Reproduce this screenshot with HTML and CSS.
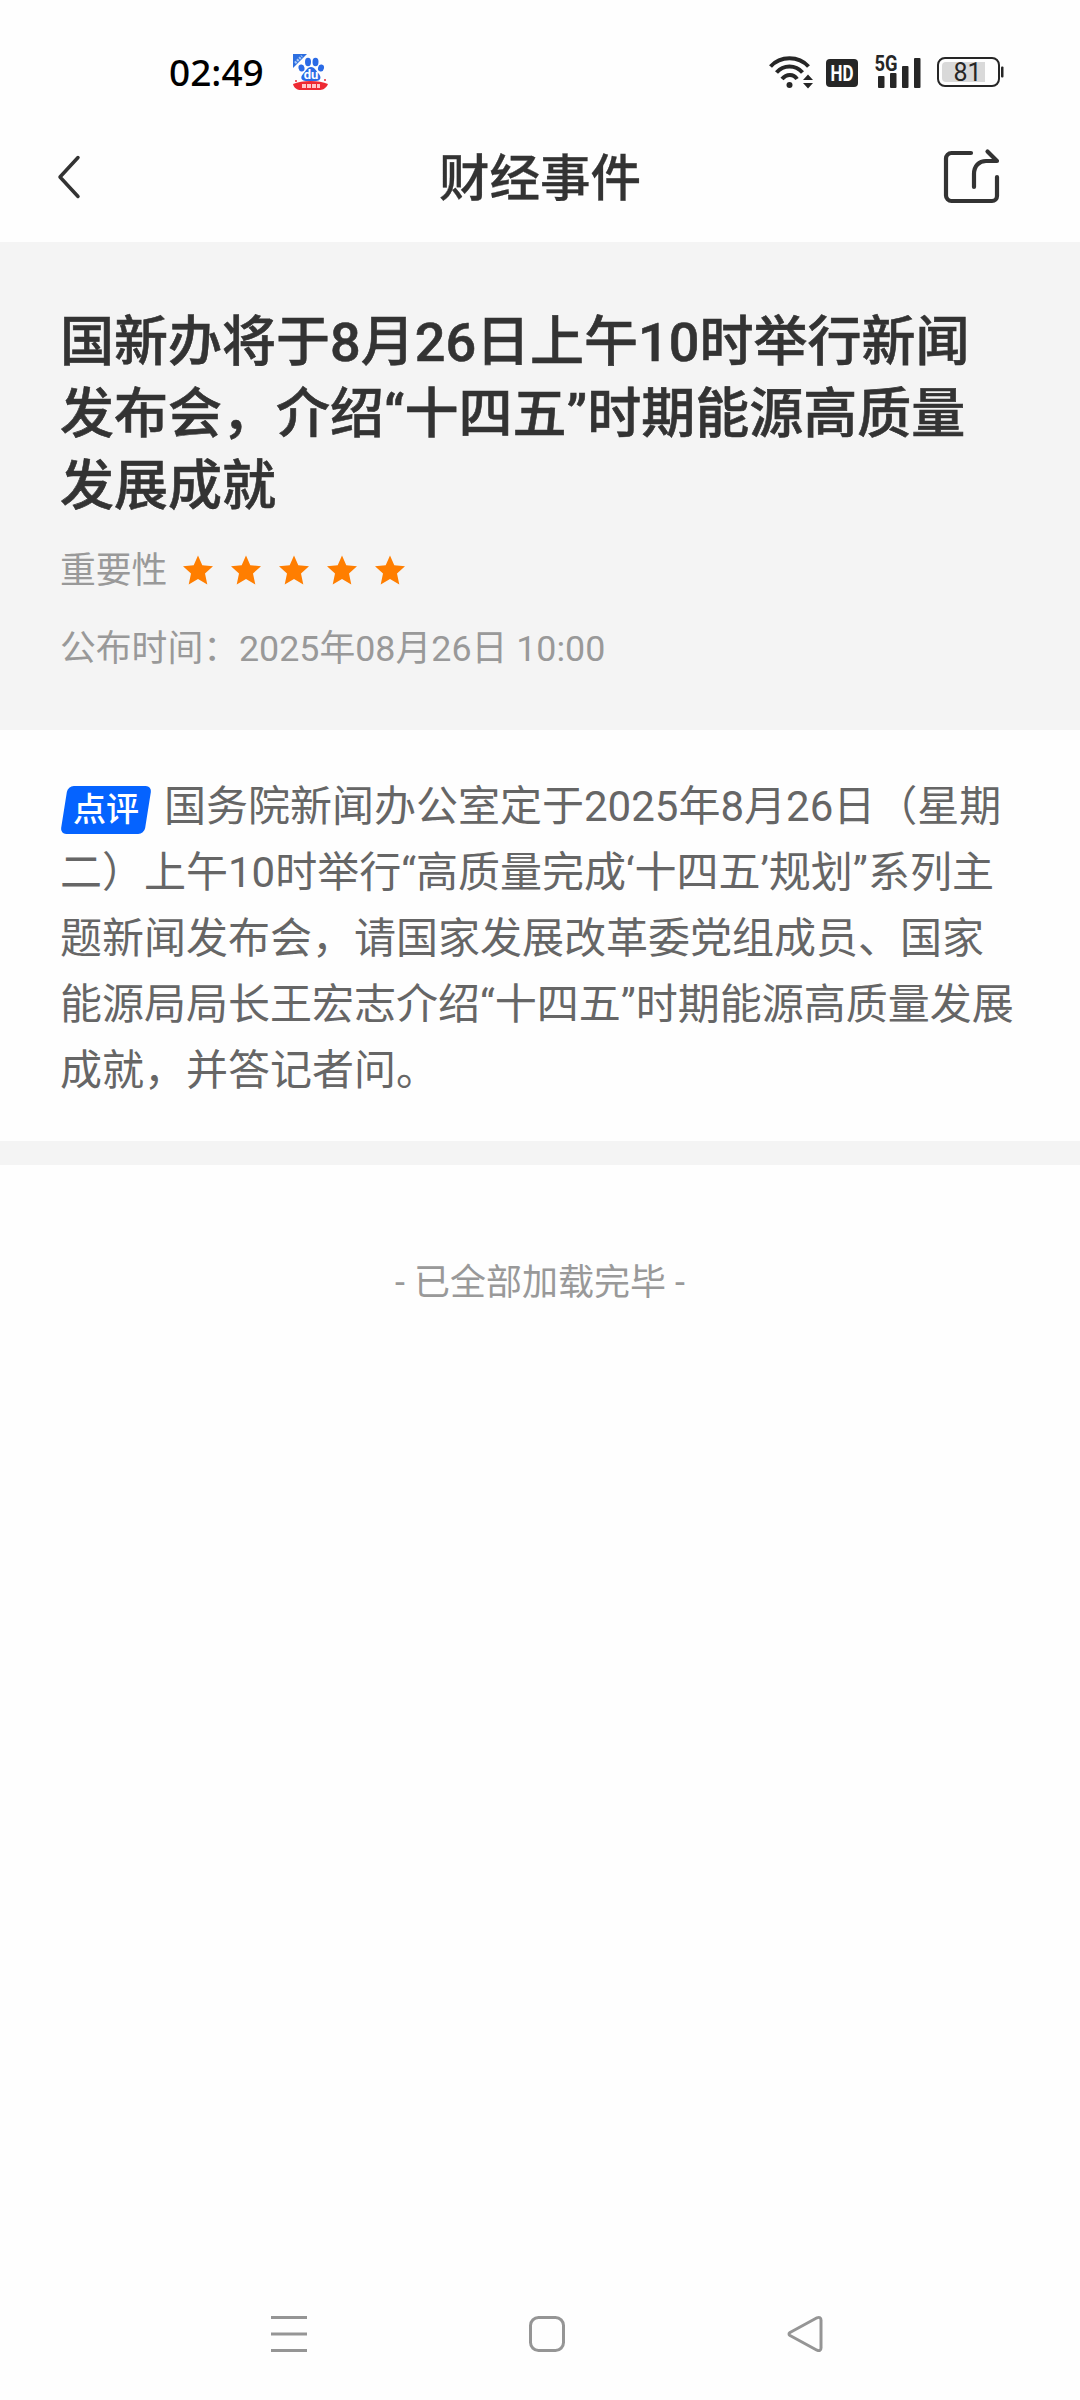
FILE: index.html
```
<!DOCTYPE html>
<html lang="zh-CN">
<head>
<meta charset="UTF-8">
<meta name="viewport" content="width=device-width, initial-scale=1.0">
<title>财经事件</title>
<link rel="stylesheet" href="styles.css">
</head>
<body>
    <div class="screen">
        <!-- Status bar -->
        <div class="status-bar">
            <div class="status-left">
                <span class="clock">02:49</span>
                <svg class="app-icon" width="36" height="38" viewBox="0 0 36 38">
                    <path d="M1 1h14L1 15z" fill="#2d6fe0"/>
                    <path d="M3 10L10 3" stroke="#a9c8f5" stroke-width="2.500" stroke-dasharray="2 1"/>
                    <g fill="#2b6be6">
                        <ellipse cx="9.500" cy="15" rx="3" ry="3.500" transform="rotate(-12 9.500 15)"/>
                        <ellipse cx="16" cy="9" rx="3" ry="4.200"/>
                        <ellipse cx="23.500" cy="9" rx="3" ry="4.200"/>
                        <ellipse cx="29" cy="15" rx="3" ry="3.500" transform="rotate(12 29 15)"/>
                        <path d="M19 14c4 0 5 4 8 7 3 4 1 7-3 7H14c-5 0-6-4-3-7 3-3 4-7 8-7z"/>
                    </g>
                    <path d="M1 31c9-4 26-4 35 0-2 5-6 6-9 6H9c-4 0-7-2-8-6z" fill="#ee2a33"/>
                    <circle cx="4" cy="28" r="1" fill="#ee2a33"/>
                    <circle cx="33" cy="27" r="1" fill="#ee2a33"/>
                    <text x="19" y="26" class="icon-du">du</text>
                    <path d="M10 33h18" stroke="#ffc9c9" stroke-width="4" stroke-dasharray="4 1"/>
                </svg>
            </div>
            <div class="status-right">
                <svg width="44" height="36" viewBox="0 0 44 36" fill="none" stroke="#262626" stroke-width="4">
                    <path d="M1.500 12.500C11.500 1.500 29.500 1.500 39.500 12.500"/>
                    <path d="M7.500 18.500C14.500 10.500 26.500 10.500 33.500 18.500"/>
                    <path d="M13 25C17.500 19.500 24.500 19.500 28 25"/>
                    <circle cx="20.500" cy="31" r="3" fill="#262626" stroke="none"/>
                    <path d="M39 20.500l5 5.500h-10zM39 34.500l5-5.500h-10z" fill="#262626" stroke="none"/>
                </svg>
                <svg class="hd" width="32" height="28" viewBox="0 0 32 28">
                    <rect width="32" height="28" rx="4" fill="#262626"/>
                    <text x="16" y="22" class="hd-text" textLength="23" lengthAdjust="spacingAndGlyphs">HD</text>
                </svg>
                <svg class="signal" width="48" height="34" viewBox="0 0 48 34" fill="#262626">
                    <text x="-0.500" y="17" class="net-text" textLength="23" lengthAdjust="spacingAndGlyphs">5G</text>
                    <rect x="3" y="22" width="6.500" height="12" rx="1"/>
                    <rect x="15" y="19" width="6.500" height="15" rx="1"/>
                    <rect x="27" y="12" width="6.500" height="22" rx="1"/>
                    <rect x="39" y="4" width="6.500" height="30" rx="1"/>
                </svg>
                <svg class="battery" width="68" height="30" viewBox="0 0 68 30">
                    <rect x="1" y="1" width="61" height="28" rx="7" fill="none" stroke="#262626" stroke-width="2"/>
                    <path d="M9 5h39v20H9a4 4 0 0 1-4-4V9a4 4 0 0 1 4-4z" fill="#d9d9d9"/>
                    <rect x="64" y="9.500" width="2.500" height="11" rx="1" fill="#262626"/>
                    <text x="30.500" y="24" class="battery-text">81</text>
                </svg>
            </div>
        </div>

        <!-- Title bar -->
        <div class="nav-bar">
            <svg width="26" height="44" viewBox="0 0 26 44" fill="none" stroke="#333" stroke-width="3.500" stroke-linecap="round" stroke-linejoin="round">
                <path d="M22 2.500L4 22l18 19.500"/>
            </svg>
            <h1>财经事件</h1>
            <svg width="56" height="56" viewBox="0 0 56 56" fill="none" stroke="#333" stroke-width="4.200" stroke-linecap="round" stroke-linejoin="round">
                <path d="M27 4H7.500A5.500 5.500 0 0 0 2 9.500v37A5.500 5.500 0 0 0 7.500 52H48a5 5 0 0 0 5-5V28"/>
                <path d="M30 38V25C30 17 35 12 42 12h11L43.500 2.500"/>
            </svg>
        </div>

        <div class="event">
            <h2>国新办将于8月26日上午10时举行新闻发布会，介绍“十四五”时期能源高质量发展成就</h2>
            <div class="meta">
                <span>重要性</span>
                <div class="stars">
                    <svg viewBox="0 0 30 30"><path d="M15 0.500l4.300 9.700 10.700 1-8 7.300 2.300 11L15 24l-9.300 5.500 2.300-11-8-7.300 10.700-1z"/></svg>
                    <svg viewBox="0 0 30 30"><path d="M15 0.500l4.300 9.700 10.700 1-8 7.300 2.300 11L15 24l-9.300 5.500 2.300-11-8-7.300 10.700-1z"/></svg>
                    <svg viewBox="0 0 30 30"><path d="M15 0.500l4.300 9.700 10.700 1-8 7.300 2.300 11L15 24l-9.300 5.500 2.300-11-8-7.300 10.700-1z"/></svg>
                    <svg viewBox="0 0 30 30"><path d="M15 0.500l4.300 9.700 10.700 1-8 7.300 2.300 11L15 24l-9.300 5.500 2.300-11-8-7.300 10.700-1z"/></svg>
                    <svg viewBox="0 0 30 30"><path d="M15 0.500l4.300 9.700 10.700 1-8 7.300 2.300 11L15 24l-9.300 5.500 2.300-11-8-7.300 10.700-1z"/></svg>
                </div>
            </div>
            <div class="meta publish">公布时间：2025年08月26日 10:00</div>
        </div>

        <div class="comment">
            <p><span class="tag">点评</span>国务院新闻办公室定于2025年8月26日（星期二）上午10时举行“高质量完成‘十四五’规划”系列主题新闻发布会，请国家发展改革委党组成员、国家能源局局长王宏志介绍“十四五”时期能源高质量发展成就，并答记者问。</p>
        </div>

        <div class="load-end">- 已全部加载完毕 -</div>

        <!-- System navigation -->
        <div class="system-nav">
            <svg width="38" height="38" viewBox="0 0 38 38">
                <path d="M1 2.500h36M1 19h36M1 35.500h36"/>
            </svg>
            <svg width="38" height="38" viewBox="0 0 38 38">
                <rect x="2.500" y="2.500" width="33" height="33" rx="8"/>
            </svg>
            <svg width="38" height="38" viewBox="0 0 38 38">
                <path d="M31 2.800L4 17.500q-2 1.500 0 3L31 35.200q4 1.500 4-2.500V5.300q0-4-4-2.500z"/>
            </svg>
        </div>
    </div>
</body>
</html>
```

FILE: styles.css
```
* {
    box-sizing: border-box;
    margin: 0;
    padding: 0;
}

body {
    background-color: #fefefe;
    font-family: Roboto, "Noto Sans CJK SC", sans-serif;
    color: #333;
}

svg {
    display: block;
    flex-shrink: 0;
    overflow: visible;
}

.screen {
    display: flex;
    flex-direction: column;
    width: 1080px;
    height: 2400px;
    overflow: hidden;
}

/* Status bar */
.status-bar {
    display: flex;
    justify-content: space-between;
    align-items: center;
    height: 112px;
    padding: 32px 75px 0 169px;
}

.status-left,
.status-right {
    display: flex;
    align-items: center;
}

.clock {
    width: 123px;
    font-family: "Noto Sans", sans-serif;
    font-size: 37px;
    font-weight: 500;
    line-height: 40px;
    color: #000;
}

.icon-du {
    font-size: 13px;
    font-weight: bold;
    text-anchor: middle;
    fill: #fff;
}

.hd {
    margin: 1px 17px 0 13px;
}

.hd-text {
    font-size: 22px;
    font-weight: bold;
    text-anchor: middle;
    fill: #fff;
}

.net-text {
    font-size: 22px;
    font-weight: bold;
}

.signal {
    margin: 0 14px 2px 0;
}

.battery-text {
    font-size: 25px;
    text-anchor: middle;
    fill: #262626;
}

/* Title bar */
.nav-bar {
    display: flex;
    justify-content: space-between;
    align-items: center;
    height: 130px;
    padding: 0 80px 0 56px;
}

.nav-bar h1 {
    padding: 4px 0 0 54px;
    font-size: 50.5px;
    font-weight: 500;
    line-height: 72px;
    -webkit-text-stroke: 0.3px #333;
}

/* Event summary */
.event {
    height: 488px;
    padding: 65px 60px 0;
    background-color: #f4f4f4;
}

.event h2 {
    padding-right: 20px;
    font-size: 54px;
    font-weight: 500;
    line-height: 72px;
    -webkit-text-stroke: 0.6px #333;
}

.meta {
    display: flex;
    align-items: center;
    height: 48px;
    margin-top: 20px;
    font-size: 35.8px;
    color: #999;
}

.publish {
    margin-top: 30px;
}

.stars {
    display: flex;
    gap: 18px;
    margin: 5px 0 0 16px;
}

.stars svg {
    width: 30px;
    height: 30px;
    fill: #ff7e00;
}

/* Comment text */
.comment {
    height: 435px;
    padding: 44px 60px 0;
    border-bottom: 24px solid #f4f4f4;
}

.comment p {
    font-size: 42px;
    line-height: 66px;
    color: #666;
}

.tag {
    display: inline-block;
    position: relative;
    z-index: 0;
    width: 92px;
    height: 48px;
    margin-right: 12px;
    font-size: 33px;
    font-weight: 500;
    line-height: 48px;
    text-align: center;
    color: #fff;
}

/* Slanted blue plate behind the tag text */
.tag::before {
    content: "";
    position: absolute;
    z-index: -1;
    top: 0;
    left: 4px;
    width: 84px;
    height: 48px;
    background-color: #0563ff;
    border-radius: 6px;
    transform: skewX(-9deg);
}

.load-end {
    margin-top: 91px;
    font-size: 36px;
    line-height: 54px;
    text-align: center;
    color: #999;
}

.system-nav {
    display: flex;
    justify-content: space-between;
    margin-top: auto;
    padding: 0 256px 47px 270px;
}

.system-nav svg {
    fill: none;
    stroke: #959595;
    stroke-width: 3;
    stroke-linejoin: round;
}
```
